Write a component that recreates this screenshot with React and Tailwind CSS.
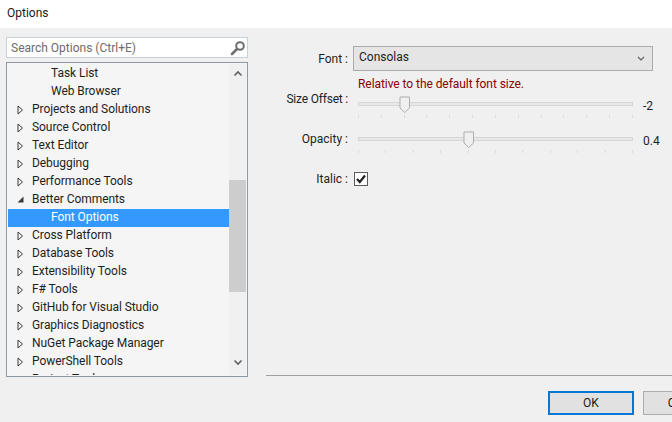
const font = { fontFamily: 'Roboto, "Noto Sans", sans-serif' };

const treeItems = [
  { label: "Task List", child: true },
  { label: "Web Browser", child: true },
  { label: "Projects and Solutions" },
  { label: "Source Control" },
  { label: "Text Editor" },
  { label: "Debugging" },
  { label: "Performance Tools" },
  { label: "Better Comments", open: true },
  { label: "Font Options", child: true, selected: true },
  { label: "Cross Platform" },
  { label: "Database Tools" },
  { label: "Extensibility Tools" },
  { label: "F# Tools" },
  { label: "GitHub for Visual Studio" },
  { label: "Graphics Diagnostics" },
  { label: "NuGet Package Manager" },
  { label: "PowerShell Tools" },
  { label: "Project Tools" },
];

function Arrow({ open }) {
  if (open) {
    return (
      <svg width="7" height="9" viewBox="0 0 7 9" className="shrink-0">
        <path d="M0.5 7.5 L6.5 7.5 L6.5 1.5 Z" fill="#3a3a3a" />
      </svg>
    );
  }
  return (
    <svg width="7" height="10" viewBox="0 0 7 10" className="shrink-0">
      <path d="M1 1 L5.5 5 L1 9 Z" fill="none" stroke="#3a3a3a" strokeWidth="1" />
    </svg>
  );
}

function TreeRow({ label, child, open, selected }) {
  return (
    <div
      className={`flex h-[18px] shrink-0 items-center pb-px text-[12px] leading-[17px] tracking-[-0.06px] ${
        selected ? "bg-[#3399ff] text-white" : "text-[#1e1e1e]"
      }`}
    >
      <div className="flex w-[24px] shrink-0 justify-end pr-[8px]">
        {!child && <Arrow open={open} />}
      </div>
      <span className={child ? "pl-[19px]" : ""}>{label}</span>
    </div>
  );
}

function Slider({ ticks, thumbLeft, value }) {
  return (
    <div className="flex items-start">
      <div className="relative h-[26px] w-[275px]">
        <div className="mt-[6px] h-[4px] border border-[#d6d6d6] bg-[#e7e9e9]" />
        <div className="mt-[9px] flex justify-between">
          {Array.from({ length: ticks }).map((_, i) => (
            <div key={i} className="h-[3px] w-px bg-[#dcdcdc]" />
          ))}
        </div>
        <svg
          width="12"
          height="18"
          viewBox="0 0 12 18"
          className="absolute top-0"
          style={{ left: thumbLeft }}
        >
          <path d="M1 1 H10.5 V12 L5.75 16.5 L1 12 Z" fill="#f0f0f0" stroke="#adadad" strokeWidth="1" />
        </svg>
      </div>
      <span className="ml-[10px] pt-px text-[12px] leading-[18px] text-[#1e1e1e]">{value}</span>
    </div>
  );
}

function App() {
  return (
    <div className="h-[422px] w-[672px] overflow-hidden bg-[#f0f0f0]" style={font}>
      <div className="flex h-[28px] items-center bg-white pb-[2px] pl-[7px] text-[12px] text-[#1a1a1a]">
        Options
      </div>

      <div className="flex h-[350px]">
        <div className="flex w-[266px] shrink-0 flex-col pl-[6px] pr-[18px] pt-[9px]">
          <div className="flex h-[21px] items-center justify-between border border-[#c8d0dc] bg-white pl-[4px] pr-[1px] text-[12px] text-[#6d6d6d]">
            <span>Search Options (Ctrl+E)</span>
            <svg width="16" height="16" viewBox="0 0 16 16">
              <circle cx="10" cy="6" r="3.8" fill="none" stroke="#6f6f6f" strokeWidth="2" />
              <path d="M7 9 L2 14" stroke="#6f6f6f" strokeWidth="2.6" strokeLinecap="round" />
            </svg>
          </div>

          <div className="mt-[4px] flex h-[315px] border border-[#8f98a3] bg-[#f5f5f5] p-px">
            <div className="flex h-full flex-1 flex-col overflow-hidden pt-[1px]">
              {treeItems.map((item) => (
                <TreeRow key={item.label} {...item} />
              ))}
            </div>
            <div className="flex w-[17px] shrink-0 flex-col items-center bg-[#f0f0f0]">
              <svg width="10" height="7" viewBox="0 0 10 7" className="mt-[6px]">
                <path d="M1.5 5.5 L5 2 L8.5 5.5" fill="none" stroke="#606060" strokeWidth="1.6" />
              </svg>
              <div className="mt-[103px] h-[112px] w-full bg-[#cdcdcd]" />
              <svg width="10" height="7" viewBox="0 0 10 7" className="mt-[67px]">
                <path d="M1.5 1.5 L5 5 L8.5 1.5" fill="none" stroke="#606060" strokeWidth="1.6" />
              </svg>
            </div>
          </div>
        </div>

        <div className="flex h-[348px] flex-1 flex-col border-b border-[#a0a0a0] pt-[18px] text-[12px] text-[#1e1e1e]">
          <div className="flex items-center">
            <span className="w-[82px] text-right">Font :</span>
            <div className="ml-[5px] flex h-[25px] w-[300px] items-center justify-between border border-[#acacac] bg-[#e5e5e5] pl-[5px] pr-[7px]">
              <span className="pb-[3px]">Consolas</span>
              <svg width="8" height="6" viewBox="0 0 8 6">
                <path d="M1 1 L4 4 L7 1" fill="none" stroke="#606060" strokeWidth="1.2" />
              </svg>
            </div>
          </div>

          <div className="mt-[4px] pl-[92px] leading-[18px] tracking-[-0.06px] text-[#8b0000]">
            Relative to the default font size.
          </div>

          <div className="mt-[3px] flex items-start">
            <span className="-mt-[6px] w-[82px] text-right leading-[18px] tracking-[-0.2px]">Size Offset :</span>
            <div className="ml-[10px]">
              <Slider ticks={13} thumbLeft={41} value="-2" />
            </div>
          </div>

          <div className="mt-[9px] flex items-start">
            <span className="-mt-px w-[82px] text-right leading-[18px]">Opacity :</span>
            <div className="ml-[10px]">
              <Slider ticks={11} thumbLeft={105} value="0.4" />
            </div>
          </div>

          <div className="mt-[13px] flex items-center">
            <span className="w-[82px] text-right leading-[18px]">Italic :</span>
            <div className="ml-[6px] flex h-[14px] w-[14px] items-center justify-center border border-[#5a5a5a] bg-white">
              <svg width="12" height="12" viewBox="0 0 12 12">
                <path d="M2 6 L4.8 9 L10 2.5" fill="none" stroke="#222222" strokeWidth="2.2" />
              </svg>
            </div>
          </div>
        </div>
      </div>

      <div className="flex gap-[9px] overflow-hidden pl-[548px] pt-[13px] text-[12px] text-[#1a1a1a]">
        <button className="flex h-[24px] w-[86px] shrink-0 items-center justify-center border-2 border-[#0078d7] bg-[#e1e1e1]">
          OK
        </button>
        <button className="flex h-[24px] w-[86px] shrink-0 items-center justify-center border border-[#adadad] bg-[#e1e1e1]">
          Cancel
        </button>
      </div>
    </div>
  );
}

export default App;
